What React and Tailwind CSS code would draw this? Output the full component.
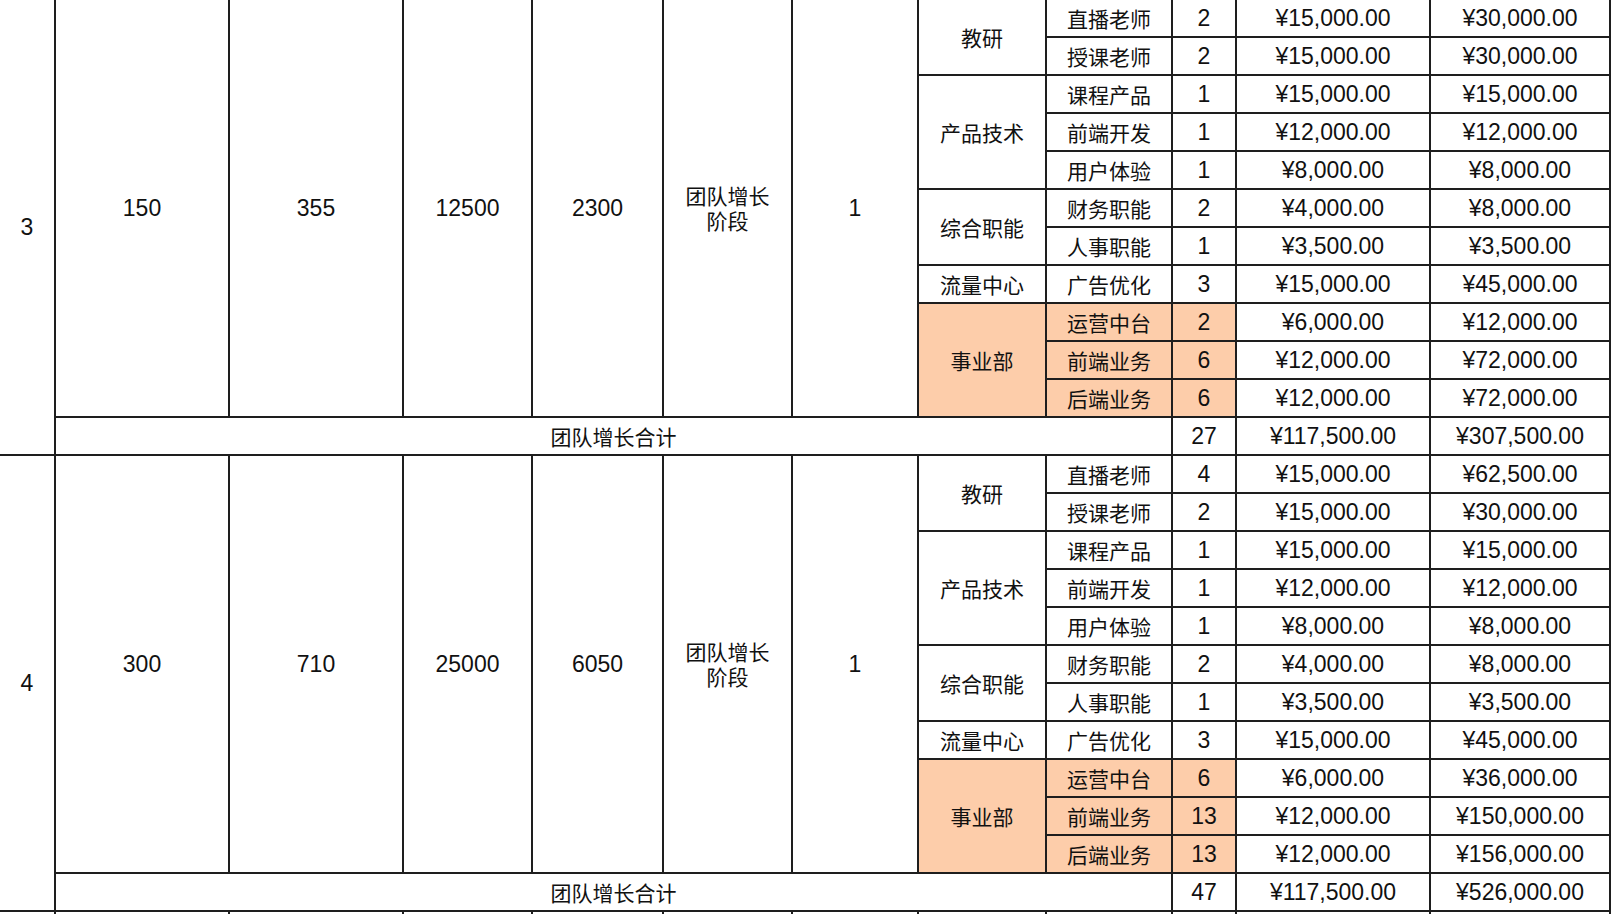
const groups = [
  {
    no: 3,
    stats: ["150", "355", "12500", "2300"],
    level: "1",
    counts: ["2", "2", "1", "1", "1", "2", "1", "3", "2", "6", "6"],
    totals: [
      "¥30,000.00",
      "¥30,000.00",
      "¥15,000.00",
      "¥12,000.00",
      "¥8,000.00",
      "¥8,000.00",
      "¥3,500.00",
      "¥45,000.00",
      "¥12,000.00",
      "¥72,000.00",
      "¥72,000.00",
    ],
    sum: ["27", "¥117,500.00", "¥307,500.00"],
  },
  {
    no: 4,
    stats: ["300", "710", "25000", "6050"],
    level: "1",
    counts: ["4", "2", "1", "1", "1", "2", "1", "3", "6", "13", "13"],
    totals: [
      "¥62,500.00",
      "¥30,000.00",
      "¥15,000.00",
      "¥12,000.00",
      "¥8,000.00",
      "¥8,000.00",
      "¥3,500.00",
      "¥45,000.00",
      "¥36,000.00",
      "¥150,000.00",
      "¥156,000.00",
    ],
    sum: ["47", "¥117,500.00", "¥526,000.00"],
  },
];

// department -> roles, with unit price
const depts = [
  { name: "教研", span: "row-span-2", roles: [["直播老师", "¥15,000.00"], ["授课老师", "¥15,000.00"]] },
  {
    name: "产品技术",
    span: "row-span-3",
    roles: [["课程产品", "¥15,000.00"], ["前端开发", "¥12,000.00"], ["用户体验", "¥8,000.00"]],
  },
  { name: "综合职能", span: "row-span-2", roles: [["财务职能", "¥4,000.00"], ["人事职能", "¥3,500.00"]] },
  { name: "流量中心", span: "row-span-1", roles: [["广告优化", "¥15,000.00"]] },
  {
    name: "事业部",
    span: "row-span-3",
    hl: true,
    roles: [["运营中台", "¥6,000.00"], ["前端业务", "¥12,000.00"], ["后端业务", "¥12,000.00"]],
  },
];

const num = "flex items-center justify-center text-[23px] font-['Liberation_Sans','Noto_Sans_CJK_SC',sans-serif]";
const cjk = "flex items-center justify-center text-[21px] leading-[25px] font-['Noto_Sans_CJK_SC','Liberation_Sans',sans-serif]";

function Cell({ className = "", hl, children }) {
  return <div className={`${hl ? "bg-[#fdcdaa]" : "bg-white"} text-[#111] ${className}`}>{children}</div>;
}

function Group({ g }) {
  const cells = [];
  let i = 0;
  depts.forEach((d, di) => {
    d.roles.forEach(([role, price], ri) => {
      if (di === 0 && ri === 0) {
        cells.push(
          <Cell key="no" className={`${num} row-span-12`}>
            {g.no}
          </Cell>
        );
        g.stats.forEach((s, si) =>
          cells.push(
            <Cell key={"s" + si} className={`${num} row-span-11`}>
              {s}
            </Cell>
          )
        );
        cells.push(
          <Cell key="stage" className={`${cjk} row-span-11 text-center`}>
            团队增长
            <br />
            阶段
          </Cell>
        );
        cells.push(
          <Cell key="lvl" className={`${num} row-span-11`}>
            {g.level}
          </Cell>
        );
      }
      if (ri === 0) {
        cells.push(
          <Cell key={"d" + di} hl={d.hl} className={`${cjk} ${d.span}`}>
            {d.name}
          </Cell>
        );
      }
      cells.push(
        <Cell key={"r" + i} hl={d.hl} className={cjk}>
          {role}
        </Cell>
      );
      cells.push(
        <Cell key={"c" + i} hl={d.hl} className={num}>
          {g.counts[i]}
        </Cell>
      );
      cells.push(
        <Cell key={"p" + i} className={num}>
          {price}
        </Cell>
      );
      cells.push(
        <Cell key={"t" + i} className={num}>
          {g.totals[i]}
        </Cell>
      );
      i++;
    });
  });
  cells.push(
    <Cell key="sumlabel" className={`${cjk} col-span-8`}>
      团队增长合计
    </Cell>
  );
  g.sum.forEach((s, si) =>
    cells.push(
      <Cell key={"sum" + si} className={num}>
        {s}
      </Cell>
    )
  );
  return cells;
}

export default function App() {
  return (
    <div className="h-screen overflow-hidden bg-white">
      <div className="grid w-fit grid-cols-[54px_172px_172px_127px_129px_127px_124px_126px_124px_62px_192px_178px] auto-rows-[36px] gap-[2px] bg-[#1e1e1e] pr-[2px]">
        {groups.map((g) => (
          <Group key={g.no} g={g} />
        ))}
        {Array.from({ length: 12 }).map((_, k) => (
          <Cell key={"tail" + k} />
        ))}
      </div>
    </div>
  );
}
